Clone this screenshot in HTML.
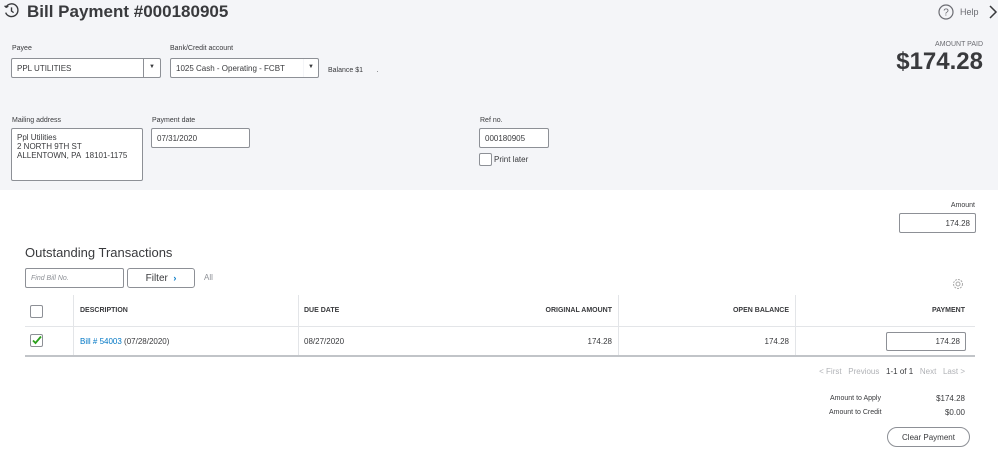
<!DOCTYPE html>
<html><head><meta charset="utf-8"><style>
*{box-sizing:border-box;margin:0;padding:0}
body{width:998px;height:451px;overflow:hidden;background:#fff;font-family:"Liberation Sans",sans-serif;color:#393a3d;position:relative}
.a{position:absolute}
.top{left:0;top:0;width:998px;height:190px;background:#f4f5f8}
.lbl{font-size:7px;color:#393a3d}
.inp{background:#fff;border:1px solid #8d9096;border-radius:2px;font-size:8px;padding:0 5px;display:flex;align-items:center}
.th{font-size:7px;font-weight:bold;color:#393a3d;top:307px}
.td{font-size:8px;color:#393a3d;top:337px}
.vd{width:1px;background:#e3e5e8}
</style></head><body>
<div class="a top"></div>
<svg class="a" style="left:3px;top:2px" width="17" height="17" viewBox="0 0 16 16" fill="none" stroke="#393a3d" stroke-width="1.3"><path d="M3 4.5A6 6 0 1 1 2.5 10"/><path d="M1.5 3.5l1.5 1.5 2-1"/><path d="M8 5v3.5l2 1.5"/></svg>
<div class="a" style="left:27px;top:2px;font-size:17px;font-weight:bold;color:#393a3d">Bill Payment #000180905</div>
<svg class="a" style="left:938px;top:4px" width="16" height="16" viewBox="0 0 16 16"><circle cx="8" cy="8" r="7" fill="none" stroke="#6b6c72" stroke-width="1.2"/><text x="8" y="11.5" font-size="10" text-anchor="middle" fill="#6b6c72" font-family="Liberation Sans">?</text></svg>
<div class="a" style="left:960px;top:7px;font-size:9px;color:#6b6c72">Help</div>
<svg class="a" style="left:988px;top:4px" width="10" height="16" viewBox="0 0 10 16"><path d="M2 2l6 6-6 6" fill="none" stroke="#393a3d" stroke-width="1.5"/></svg>

<div class="a lbl" style="left:12px;top:45px">Payee</div>
<div class="a inp" style="left:11px;top:58px;width:150px;height:20px">PPL UTILITIES</div>
<div class="a vd" style="left:143px;top:59px;height:18px;background:#8d9096"></div>
<div class="a" style="left:149px;top:64px;font-size:6px">▼</div>
<div class="a lbl" style="left:170px;top:45px">Bank/Credit account</div>
<div class="a inp" style="left:170px;top:58px;width:149px;height:20px">1025 Cash - Operating - FCBT</div>
<div class="a vd" style="left:303px;top:59px;height:18px;background:#f4f5f8"></div>
<div class="a" style="left:308px;top:64px;font-size:6px">▼</div>
<div class="a lbl" style="left:328px;top:67px">Balance $1 &nbsp; &nbsp; &nbsp; .</div>
<div class="a" style="right:15px;top:41px;font-size:7px;color:#6b6c72">AMOUNT PAID</div>
<div class="a" style="right:15px;top:48px;font-size:24px;font-weight:bold;color:#393a3d">$174.28</div>

<div class="a lbl" style="left:12px;top:117px">Mailing address</div>
<div class="a inp" style="left:11px;top:128px;width:132px;height:53px;display:block;padding:4px 5px;line-height:9px">Ppl Utilities<br>2 NORTH 9TH ST<br>ALLENTOWN, PA &nbsp;18101-1175</div>
<div class="a lbl" style="left:152px;top:117px">Payment date</div>
<div class="a inp" style="left:151px;top:128px;width:99px;height:20px">07/31/2020</div>
<div class="a lbl" style="left:480px;top:117px">Ref no.</div>
<div class="a inp" style="left:479px;top:128px;width:70px;height:20px">000180905</div>
<div class="a" style="left:479px;top:153px;width:13px;height:13px;border:1px solid #8d9096;background:#fff;border-radius:2px"></div>
<div class="a" style="left:494px;top:155px;font-size:8px">Print later</div>

<div class="a lbl" style="right:23px;top:202px">Amount</div>
<div class="a inp" style="left:899px;top:213px;width:77px;height:20px;justify-content:flex-end">174.28</div>
<div class="a" style="left:25px;top:245px;font-size:13px;color:#393a3d">Outstanding Transactions</div>
<div class="a inp" style="left:25px;top:268px;width:99px;height:20px;font-style:italic;color:#8d9096;font-size:7px">Find Bill No.</div>
<div class="a" style="left:127px;top:268px;width:68px;height:20px;border:1px solid #8d9096;border-radius:3px;font-size:10px;display:flex;align-items:center;justify-content:center">Filter&nbsp;&nbsp;<b style="color:#0077c5;font-size:9px">›</b></div>
<div class="a" style="left:204px;top:273px;font-size:8px;color:#8d9096">All</div>
<svg class="a" style="left:952px;top:278px" width="12" height="12" viewBox="0 0 12 12"><circle cx="6" cy="6" r="4.5" fill="none" stroke="#aaa" stroke-dasharray="2 1"/><circle cx="6" cy="6" r="2" fill="none" stroke="#aaa"/></svg>

<div class="a" style="left:25px;top:326px;width:950px;height:1px;background:#e3e5e8"></div>
<div class="a" style="left:25px;top:355px;width:950px;height:2px;background:#c1c4c8"></div>
<div class="a vd" style="left:73px;top:295px;height:60px"></div>
<div class="a vd" style="left:298px;top:295px;height:60px"></div>
<div class="a vd" style="left:618px;top:295px;height:60px"></div>
<div class="a vd" style="left:795px;top:295px;height:60px"></div>
<div class="a" style="left:30px;top:305px;width:13px;height:13px;border:1px solid #8d9096;border-radius:2px"></div>
<div class="a" style="left:30px;top:334px;width:13px;height:13px;border:1px solid #8d9096;border-radius:2px"></div>
<svg class="a" style="left:31px;top:334px" width="12" height="12" viewBox="0 0 12 12"><path d="M2 6.5l2.5 2.5L10 2.5" fill="none" stroke="#2ca01c" stroke-width="1.8"/></svg>
<div class="a th" style="left:80px">DESCRIPTION</div>
<div class="a th" style="left:304px">DUE DATE</div>
<div class="a th" style="right:386px">ORIGINAL AMOUNT</div>
<div class="a th" style="right:209px">OPEN BALANCE</div>
<div class="a th" style="right:33px">PAYMENT</div>
<div class="a td" style="left:80px"><span style="color:#0077c5">Bill # 54003</span> (07/28/2020)</div>
<div class="a td" style="left:304px">08/27/2020</div>
<div class="a td" style="right:386px">174.28</div>
<div class="a td" style="right:209px">174.28</div>
<div class="a inp" style="left:886px;top:332px;width:80px;height:19px;justify-content:flex-end">174.28</div>

<div class="a" style="right:33px;top:367px;font-size:8px;color:#b0b2b6">&lt; First &nbsp;&nbsp;Previous &nbsp;&nbsp;<span style="color:#393a3d">1-1 of 1</span> &nbsp;&nbsp;Next &nbsp;&nbsp;Last &gt;</div>
<div class="a" style="left:830px;top:395px;font-size:7px">Amount to Apply</div>
<div class="a" style="right:33px;top:394px;font-size:8px">$174.28</div>
<div class="a" style="left:829px;top:409px;font-size:7px">Amount to Credit</div>
<div class="a" style="right:33px;top:408px;font-size:8px">$0.00</div>
<div class="a" style="left:887px;top:427px;width:83px;height:20px;border:1px solid #8d9096;border-radius:10px;font-size:8px;display:flex;align-items:center;justify-content:center">Clear Payment</div>
</body></html>
